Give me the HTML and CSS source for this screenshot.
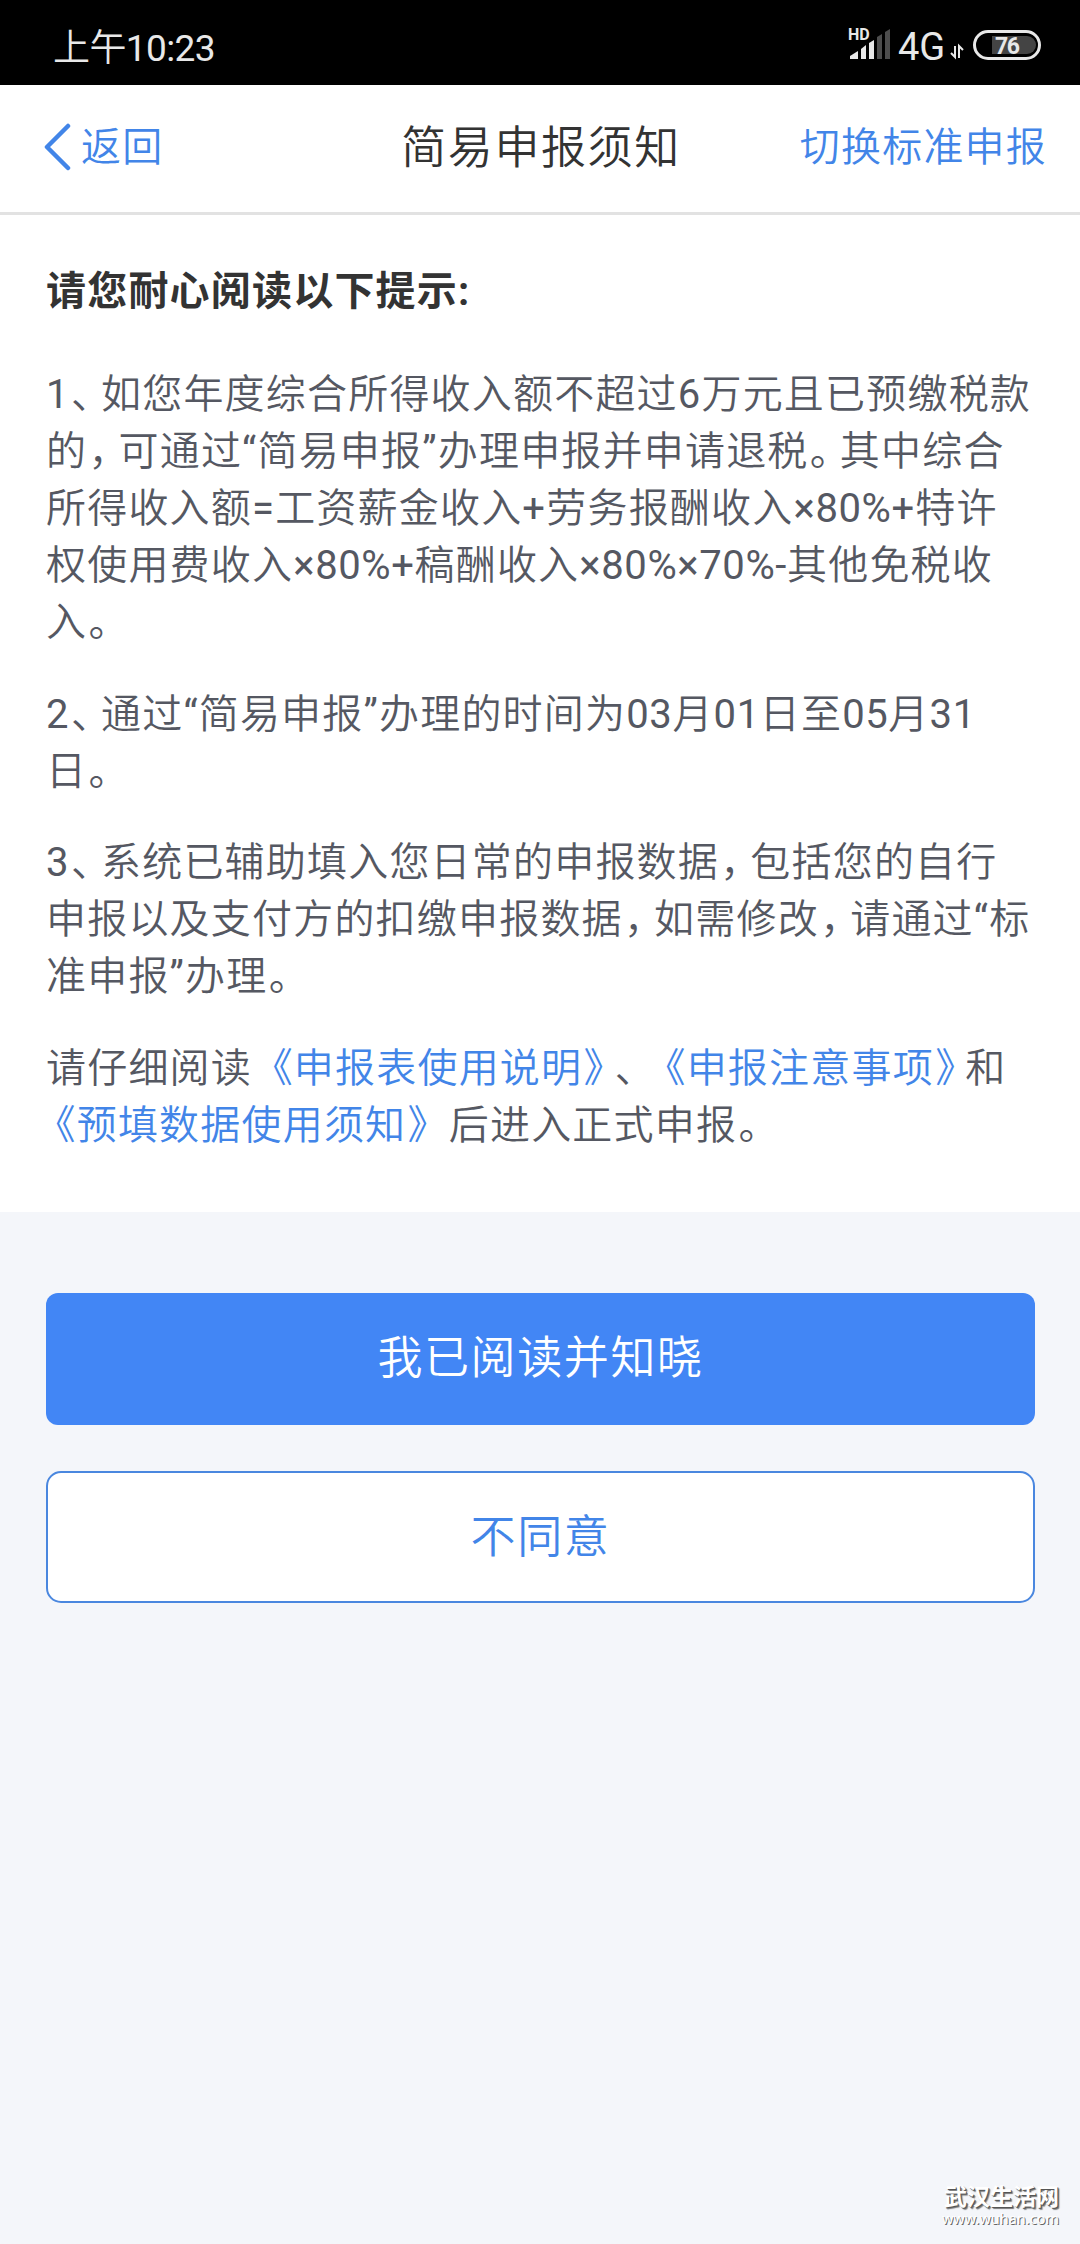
FILE: index.html
```
<!DOCTYPE html>
<html lang="zh-CN">

<head>
  <meta charset="UTF-8">
  <title>简易申报须知</title>
  <link rel="stylesheet" href="styles.css">
</head>

<body>
  <div class="status">
    <span class="time">上午10:23</span>
    <svg class="status-icons" width="196" height="60" viewBox="846 15 196 60">
      <text class="hd" x="848" y="40">HD</text>
      <g fill="#e8e8e8">
        <path d="M850 59v-3l8-5v8z" />
        <path d="M861 59V49l5-4v14z" />
        <path d="M869 59V43l5-3v19z" />
      </g>
      <g fill="#4d4d4d">
        <path d="M877 59V37l5-3v25z" />
        <path d="M885 59V32l5-3v30z" />
      </g>
      <text class="net" x="898" y="59.500">4G</text>
      <path d="M951 53l4 4V46M963 50l-4-4v12" fill="none" stroke="#e8e8e8" stroke-width="2" />
      <rect x="974.500" y="31.500" width="65" height="27" rx="13.500" fill="none" stroke="#e8e8e8" stroke-width="3" />
      <path d="M992 36h35a9 9 0 0 1 0 18h-35z" fill="#444" />
      <text class="level" x="995" y="54">76</text>
    </svg>
  </div>

  <div class="header">
    <a class="back">
      <svg width="28" height="48" viewBox="0 0 28 48">
        <path d="M25 3L4 24l21 21" fill="none" stroke="#4285e8" stroke-width="4.500" stroke-linecap="round" stroke-linejoin="round" />
      </svg>
      <span>返回</span>
    </a>
    <h1>简易申报须知</h1>
    <a class="switch">切换标准申报</a>
  </div>

  <div class="notice">
    <h2>请您耐心阅读以下提示:</h2>
    <p>1<i>、</i>如您年度综合所得收入额不超过6万元且已预缴税款<br>
      的<i>，</i>可通过“简易申报”办理申报并申请退税<i>。</i>其中综合<br>
      所得收入额=工资薪金收入+劳务报酬收入<span class="num">×80%</span>+特许<br>
      权使用费收入<span class="num">×80%+</span>稿酬收入<span class="num">×80%×70%-</span>其他免税收<br>
      入<i>。</i></p>
    <p>2<i>、</i>通过“简易申报”办理的时间为<span class="num">03</span>月<span class="num">01</span>日至<span class="num">05</span>月<span class="num">31</span><br>
      日<i>。</i></p>
    <p>3<i>、</i>系统已辅助填入您日常的申报数据<i>，</i>包括您的自行<br>
      申报以及支付方的扣缴申报数据<i>，</i>如需修改<i>，</i>请通过“标<br>
      准申报”办理<i>。</i></p>
    <p>请仔细阅读 <a><b>《</b>申报表使用说明<i>》</i></a><i>、</i> <a><b>《</b>申报注意事项<i>》</i></a>和<br>
      <a><b>《</b>预填数据使用须知<i>》</i></a> 后进入正式申报<i>。</i></p>
  </div>

  <div class="actions">
    <button class="btn primary">我已阅读并知晓</button>
    <button class="btn">不同意</button>
  </div>

  <div class="watermark">
    <span class="site">武汉生活网</span>
    <span class="url">www.wuhan.com</span>
  </div>
</body>

</html>
```
FILE: styles.css
```
* {
  box-sizing: border-box;
}

body {
  margin: 0;
  height: 2244px;
  display: flex;
  flex-direction: column;
  background: #f4f6fa;
  font-family: Roboto, "Noto Sans CJK SC DemiLight", "Noto Sans CJK SC", sans-serif;
  font-weight: 400;
  white-space: nowrap;
  text-spacing-trim: space-all;
}

h1,
h2,
p {
  margin: 0;
}

.status {
  height: 85px;
  padding: 4px 38px 0 53px;
  display: flex;
  justify-content: space-between;
  align-items: center;
  background: #000;
  color: #e8e8e8;
}

.time {
  font-size: 37px;
  letter-spacing: -0.6px;
}

.status-icons text {
  fill: #e8e8e8;
}

.hd {
  font-size: 16px;
  font-weight: 700;
}

.net {
  font-size: 38px;
}

.level {
  font-size: 23px;
  font-weight: 700;
  letter-spacing: -1.5px;
}

.header {
  height: 130px;
  padding: 0 33px 9px 35px;
  display: grid;
  grid-template-columns: 1fr auto 1fr;
  align-items: center;
  background: #fff;
  border-bottom: 3px solid #e2e2e2;
}

.back,
.switch {
  color: #4285e8;
  font-size: 40px;
  letter-spacing: 1.2px;
}

.back {
  padding-left: 8px;
  display: flex;
  align-items: center;
  gap: 10px;
}

.back svg {
  margin-top: 5px;
}

.switch {
  justify-self: end;
}

h1 {
  color: #333;
  font-size: 45px;
  font-weight: inherit;
  letter-spacing: 1.6px;
}

.notice {
  height: 997px;
  padding: 48px 46px 0;
  background: #fff;
  color: #555862;
  font-size: 40px;
  line-height: 57px;
  letter-spacing: 1.2px;
}

h2 {
  margin-bottom: 46px;
  color: #333;
  font-family: Roboto, "Noto Sans CJK SC", sans-serif;
  font-size: 40px;
  font-weight: 700;
}

p {
  margin-bottom: 34.5px;
}

.notice a {
  color: #4285e8;
}

.num {
  letter-spacing: 0.6px;
}

/* narrow full-width punctuation */
.notice i {
  margin-left: 1.3px;
  font-style: normal;
  letter-spacing: -10px;
}

.notice b {
  margin-left: -10.5px;
  font-weight: inherit;
}

.actions {
  padding: 81px 45px 0 46px;
  display: flex;
  flex-direction: column;
  gap: 46px;
}

.btn {
  height: 132px;
  padding: 0 0 8px;
  border: 2px solid #4a87df;
  border-radius: 15px;
  background: #fff;
  color: #4285e8;
  font: inherit;
  font-size: 45px;
  letter-spacing: 1.6px;
}

.primary {
  padding-bottom: 10px;
  border: none;
  border-radius: 12px;
  background: #4286f5;
  color: #fff;
}

.watermark {
  margin-top: auto;
  padding: 0 21px 18px 0;
  display: flex;
  flex-direction: column;
  align-items: flex-end;
  color: #fff;
}

.site {
  font-family: "Noto Sans CJK SC", sans-serif;
  font-size: 23px;
  font-weight: 700;
  line-height: 29px;
  text-shadow: 1px 1px 0 #555, 2px 2px 1px #777;
}

.url {
  font-family: "Noto Sans", sans-serif;
  font-size: 14.5px;
  font-weight: 400;
  line-height: 16px;
  text-shadow: 1px 1px 0 #666;
}
```
